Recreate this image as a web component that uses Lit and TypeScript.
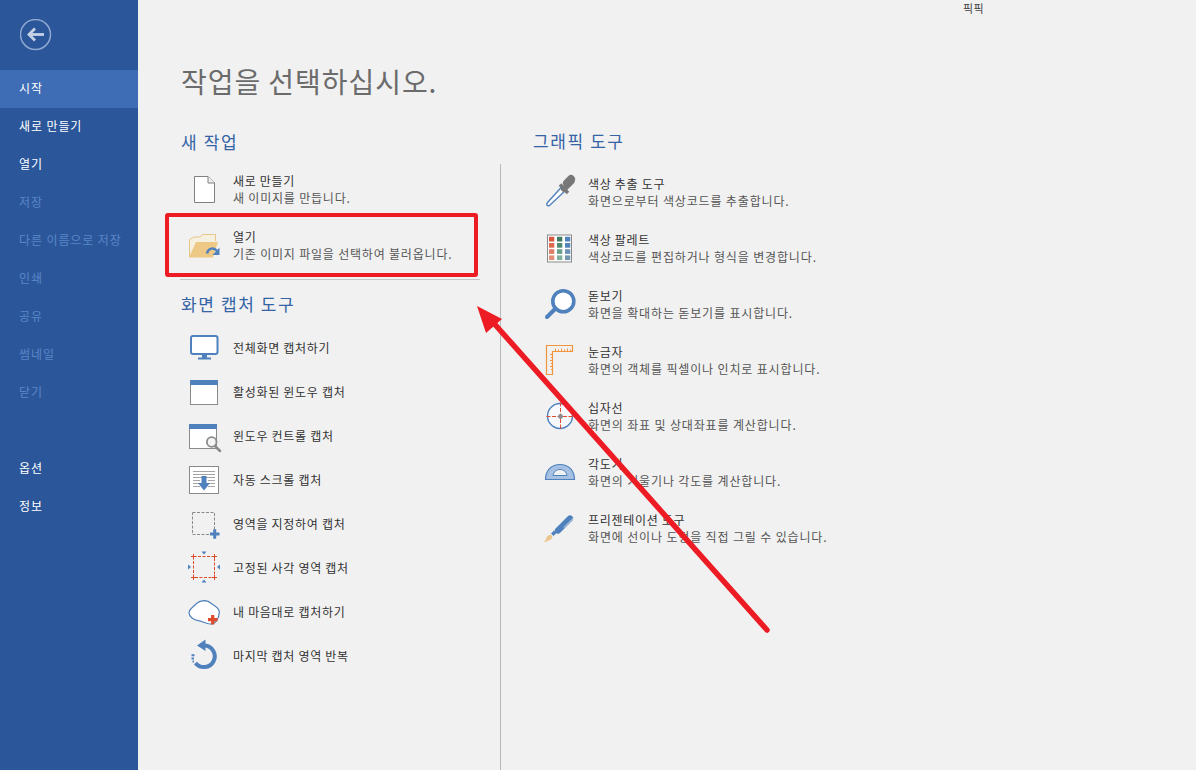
import { LitElement, html, css, svg } from "lit";
import { customElement } from "lit/decorators.js";

const BLUE = "#4f81bd";
const GRAY = "#8a8a8a";
const RED = "#dd4b2c";

const box = (body: unknown) => html`<svg class="ico" width="36" height="36" viewBox="0 0 36 36">${body}</svg>`;

const icons = {
  doc: svg`<path d="M8.500 5.500H22L28.500 12V31.500H8.500z" fill="#fff" stroke="#808080"/><path d="M22 5.500V12H28.500" fill="#eee" stroke="#808080"/>`,
  folder: svg`<path d="M3.500 30V12.500L8 10H14L16.500 7.500H29.500V14" fill="#f6f0e0" stroke="#e5c588"/>
    <path d="M3 30.500L10 15H32L27 30.500z" fill="#edc985"/>
    <path d="M21 26.500C22 21 28 20 31 24" fill="none" stroke="${BLUE}" stroke-width="2.400"/>
    <path d="M33.500 20.500V28H26.500z" fill="${BLUE}"/>`,
  monitor: svg`<rect x="5" y="7" width="26.500" height="18" rx="2" fill="#fff" stroke="${BLUE}" stroke-width="2"/>
    <path d="M16 26H21V28.500H25V30.500H12V28.500H16z" fill="${BLUE}"/>`,
  window: svg`<rect x="4.500" y="7.500" width="27" height="24" fill="#fff" stroke="${GRAY}"/><rect x="4" y="7" width="28" height="5" fill="${BLUE}"/>`,
  winctl: svg`<rect x="3.500" y="7.500" width="27" height="24" fill="#fff" stroke="${GRAY}"/><rect x="3" y="7" width="28" height="5" fill="${BLUE}"/>
    <circle cx="25.700" cy="25" r="4.800" fill="#f4f4f4" stroke="${GRAY}" stroke-width="1.800"/>
    <path d="M29 29L34 34" stroke="${GRAY}" stroke-width="2.500" stroke-linecap="round"/>`,
  scroll: svg`<rect x="3.500" y="5.500" width="29" height="27" fill="#fff" stroke="${GRAY}"/>
    <path d="M7 10.500H29M7 13.500H29M7 16.500H29M7 19.500H14M22 19.500H29M7 22.500H14M22 22.500H29M7 25.500H14M22 25.500H29" stroke="#a5a5a5"/>
    <path d="M15.500 15H20.500V22H24L18 29.500L12 22H15.500z" fill="${BLUE}"/>`,
  region: svg`<rect x="6.500" y="7.500" width="22" height="22" fill="none" stroke="${GRAY}" stroke-dasharray="3 1.500"/>
    <path d="M24 29H33.500M28.700 24.200V33.800" stroke="${BLUE}" stroke-width="3"/>`,
  fixed: svg`<rect x="7.500" y="7.500" width="21" height="21" fill="none" stroke="${RED}" stroke-dasharray="3 1.500"/>
    <path d="M5 7.500H10M7.500 5V10M26 7.500H31M28.500 5V10M5 28.500H10M7.500 26V31M26 28.500H31M28.500 26V31" stroke="${RED}"/>
    <path d="M15.500 2.500H20.500L18 5.500zM15.500 33.500H20.500L18 30.500zM2 15.500V20.500L5 18zM34 15.500V20.500L31 18z" fill="${BLUE}"/>`,
  free: svg`<path d="M3 19.500C3.500 16 7 14 9 12C12 9 15 7.700 19 7.700C24 8 25 11 29 13C32 15 33.500 17 33.300 19.500C33 25 30 31 24 31C20 31 16 28 12.300 27.700C8 27 3 24 3 19.500z" fill="#fff" stroke="${BLUE}" stroke-width="1.200"/>
    <path d="M22 26.700H31.500M26.700 22V31.500" stroke="${RED}" stroke-width="3.200"/>`,
  repeat: svg`<path d="M18.500 8.500A10.800 10.800 0 1 1 9.500 26" fill="none" stroke="${BLUE}" stroke-width="4"/>
    <path d="M19.500 2.500V14L11 8.500z" fill="${BLUE}"/>
    <path d="M5.500 18.200H8.500M5.500 21.500H8M6.500 24.500H8" stroke="${BLUE}" stroke-width="2"/>`,
  dropper: svg`<path d="M19.500 12L4.500 28.500C3 30.500 4 32.500 6.500 31.500L23 16" fill="#fff" stroke="${BLUE}" stroke-width="1.400"/>
    <path d="M17 10.500L25 19" stroke="#777" stroke-width="3.400"/>
    <path d="M21 15L28.500 7.500" stroke="#777" stroke-width="6" stroke-linecap="round"/>
    <path d="M24 9L28 5" stroke="#777" stroke-width="8" stroke-linecap="round"/>`,
  palette: svg`<rect x="4.500" y="5" width="24" height="27" fill="#fff" stroke="${GRAY}"/>
    ${[
      ["#d9563a", "#dd6a50", "#e07f68", "#e28e78"],
      ["#3f7a62", "#4f8a72", "#6ba08c", "#7fb09c"],
      ["#4f81bd", "#5585b8", "#6b92b8", "#7497b0"],
    ].map((col, i) =>
      col.map((c, j) => svg`<rect x="${6 + i * 8}" y="${6.8 + j * 6.2}" width="5.300" height="4.700" fill="${c}"/>`)
    )}`,
  zoom: svg`<circle cx="20.300" cy="15.200" r="10.500" fill="#fff" stroke="${BLUE}" stroke-width="3.600"/>
    <path d="M12.500 22.500L4 31" stroke="${BLUE}" stroke-width="4" stroke-linecap="round"/>`,
  ruler: svg`<path d="M3.500 3.500H29.500V9.500H9.500V32.500H3.500z" fill="none" stroke="#f0953c" stroke-width="1.200"/>
    <path d="M12.500 9V6.500M15.500 9V7.500M18.500 9V6.500M21.500 9V7.500M24.500 9V6.500M27.500 9V7.500M7 12.500H9.500M8 15.500H9.500M7 18.500H9.500M8 21.500H9.500M7 24.500H9.500M8 27.500H9.500" stroke="#f0953c"/>`,
  cross: svg`<circle cx="17" cy="18" r="12.500" fill="#f7f9fc" stroke="${BLUE}" stroke-width="1.400"/>
    <path d="M3.500 18.500H30.500M17.500 4.500V31.500" stroke="${RED}" stroke-dasharray="4 1.500"/>
    <circle cx="17.500" cy="18.500" r="2.400" fill="${GRAY}"/>`,
  protractor: svg`<path d="M2.500 25.500C2.500 16 9 10.500 17 10.500C25 10.500 31.500 16 31.500 25.500z" fill="#a5c0e0" stroke="${BLUE}" stroke-width="1.200"/>
    <path d="M10 21.500C10.500 18 13.500 15.500 17 15.500C20.500 15.500 23.500 18 24 21.500z" fill="#f1f1f1" stroke="${BLUE}"/>`,
  pen: svg`<path d="M1 32.500L4.500 26L7.500 24.500L9.500 26.500L8 29.500z" fill="#eac48a"/>
    <path d="M8 23.500L10.500 26L13.500 23L11 20.500z" fill="${BLUE}"/>
    <path d="M15 20.500L27 8.500" stroke="${BLUE}" stroke-width="6.200" stroke-linecap="round"/>
    <path d="M21 17.500L30.500 8" stroke="#f1f1f1" stroke-width="0.900"/>`,
};

type Row = { icon: keyof typeof icons; title: string; sub?: string };

const navTop = [
  { label: "시작", cls: "active" },
  { label: "새로 만들기", cls: "" },
  { label: "열기", cls: "" },
  { label: "저장", cls: "off" },
  { label: "다른 이름으로 저장", cls: "off" },
  { label: "인쇄", cls: "off" },
  { label: "공유", cls: "off" },
  { label: "썸네일", cls: "off" },
  { label: "닫기", cls: "off" },
];

const newRows: Row[] = [
  { icon: "doc", title: "새로 만들기", sub: "새 이미지를 만듭니다." },
  { icon: "folder", title: "열기", sub: "기존 이미지 파일을 선택하여 불러옵니다." },
];

const captureRows: Row[] = [
  { icon: "monitor", title: "전체화면 캡처하기" },
  { icon: "window", title: "활성화된 윈도우 캡처" },
  { icon: "winctl", title: "윈도우 컨트롤 캡처" },
  { icon: "scroll", title: "자동 스크롤 캡처" },
  { icon: "region", title: "영역을 지정하여 캡처" },
  { icon: "fixed", title: "고정된 사각 영역 캡처" },
  { icon: "free", title: "내 마음대로 캡처하기" },
  { icon: "repeat", title: "마지막 캡처 영역 반복" },
];

const toolRows: Row[] = [
  { icon: "dropper", title: "색상 추출 도구", sub: "화면으로부터 색상코드를 추출합니다." },
  { icon: "palette", title: "색상 팔레트", sub: "색상코드를 편집하거나 형식을 변경합니다." },
  { icon: "zoom", title: "돋보기", sub: "화면을 확대하는 돋보기를 표시합니다." },
  { icon: "ruler", title: "눈금자", sub: "화면의 객체를 픽셀이나 인치로 표시합니다." },
  { icon: "cross", title: "십자선", sub: "화면의 좌표 및 상대좌표를 계산합니다." },
  { icon: "protractor", title: "각도기", sub: "화면의 기울기나 각도를 계산합니다." },
  { icon: "pen", title: "프리젠테이션 도구", sub: "화면에 선이나 도형을 직접 그릴 수 있습니다." },
];

@customElement("app-root")
export class AppRoot extends LitElement {
  static styles = css`
    :host {
      display: flex;
      position: relative;
      width: 1196px;
      height: 770px;
      overflow: hidden;
      background: #f1f1f1;
      font-family: "Noto Sans CJK KR", "Noto Sans", sans-serif;
      font-size: 12px;
      letter-spacing: 0.7px;
      color: #444;
    }
    aside {
      width: 138px;
      flex: none;
      background: #2b579a;
      color: #fff;
    }
    .back {
      display: block;
      margin: 19px 0 19px 20px;
    }
    .nav-item {
      height: 38px;
      line-height: 36px;
      padding-left: 19px;
      letter-spacing: 0.9px;
      white-space: nowrap;
    }
    .nav-item.active {
      background: #3e6db5;
    }
    .nav-item.off {
      color: #5a86c8;
    }
    .nav-gap {
      height: 38px;
    }
    main {
      flex: 1;
      min-width: 0;
      display: flex;
      flex-direction: column;
    }
    .titlebar {
      height: 16px;
      line-height: 16px;
      padding-left: 825px;
      font-size: 11px;
      letter-spacing: 0.5px;
    }
    h1 {
      margin: 43px 0 0 43px;
      height: 44px;
      line-height: 44px;
      font-size: 28px;
      font-weight: 400;
      letter-spacing: 0.95px;
      color: #6b6b6b;
    }
    .cols {
      flex: 1;
      display: flex;
      margin-top: 25px;
      padding-left: 43px;
    }
    h2 {
      margin: 0;
      height: 28px;
      line-height: 28px;
      font-size: 17px;
      font-weight: 400;
      letter-spacing: 1.6px;
      color: #3464a6;
    }
    .left {
      width: 319px;
      flex: none;
    }
    .left .rows {
      padding: 5px 0 0 5px;
    }
    .sep {
      height: 1px;
      width: 300px;
      margin: 6px 0 10px -1px;
      background: #c4c4c4;
    }
    .right {
      flex: 1;
      display: flex;
      flex-direction: column;
    }
    .right h2 {
      margin: -1px 0 0 33px;
    }
    .right .rows {
      flex: 1;
      margin-top: 9px;
      padding-left: 42px;
      border-left: 1px solid #b9b9b9;
    }
    .row {
      display: flex;
      align-items: center;
      height: 56px;
    }
    .single {
      padding: 7px 0 0 5px;
    }
    .single .row {
      height: 44px;
    }
    .ico {
      display: block;
      flex: none;
      margin-right: 11px;
    }
    .right .ico {
      margin-right: 9px;
    }
    .t {
      line-height: 17px;
      color: #333;
    }
    .s {
      line-height: 17px;
      letter-spacing: 0.8px;
      color: #555;
    }
    .right .s {
      letter-spacing: 0.85px;
    }
    .highlight {
      position: absolute;
      left: 165px;
      top: 213px;
      width: 313px;
      height: 64px;
      box-sizing: border-box;
      border: 4px solid #ed1c24;
      border-radius: 3px;
    }
    .arrow {
      position: absolute;
      left: 0;
      top: 0;
      pointer-events: none;
    }
  `;

  private row(r: Row) {
    return html`<div class="row">
      ${box(icons[r.icon])}
      <div>
        <div class="t">${r.title}</div>
        ${r.sub ? html`<div class="s">${r.sub}</div>` : null}
      </div>
    </div>`;
  }

  render() {
    return html`
      <aside>
        <svg class="back" width="32" height="32" viewBox="0 0 32 32">
          <circle cx="15.500" cy="15.500" r="15" fill="none" stroke="#8ea8d0" stroke-width="1.500"/>
          <path d="M9 15.500H24" stroke="#c6d3e7" stroke-width="2.800"/>
          <path d="M15 9.500L9 15.500L15 21.500" fill="none" stroke="#c6d3e7" stroke-width="2.800"/>
        </svg>
        ${navTop.map((n) => html`<div class="nav-item ${n.cls}">${n.label}</div>`)}
        <div class="nav-gap"></div>
        <div class="nav-item">옵션</div>
        <div class="nav-item">정보</div>
      </aside>
      <main>
        <div class="titlebar">픽픽</div>
        <h1>작업을 선택하십시오.</h1>
        <div class="cols">
          <section class="left">
            <h2>새 작업</h2>
            <div class="rows">${newRows.map((r) => this.row(r))}</div>
            <div class="sep"></div>
            <h2>화면 캡처 도구</h2>
            <div class="single">${captureRows.map((r) => this.row(r))}</div>
          </section>
          <section class="right">
            <h2>그래픽 도구</h2>
            <div class="rows">${toolRows.map((r) => this.row(r))}</div>
          </section>
        </div>
      </main>
      <div class="highlight"></div>
      <svg class="arrow" width="1196" height="770" viewBox="0 0 1196 770">
        <path d="M767 630L491 320" stroke="#ed1c24" stroke-width="5.500" stroke-linecap="round"/>
        <path d="M477 306L502 319L486 333z" fill="#ed1c24"/>
      </svg>
    `;
  }
}
